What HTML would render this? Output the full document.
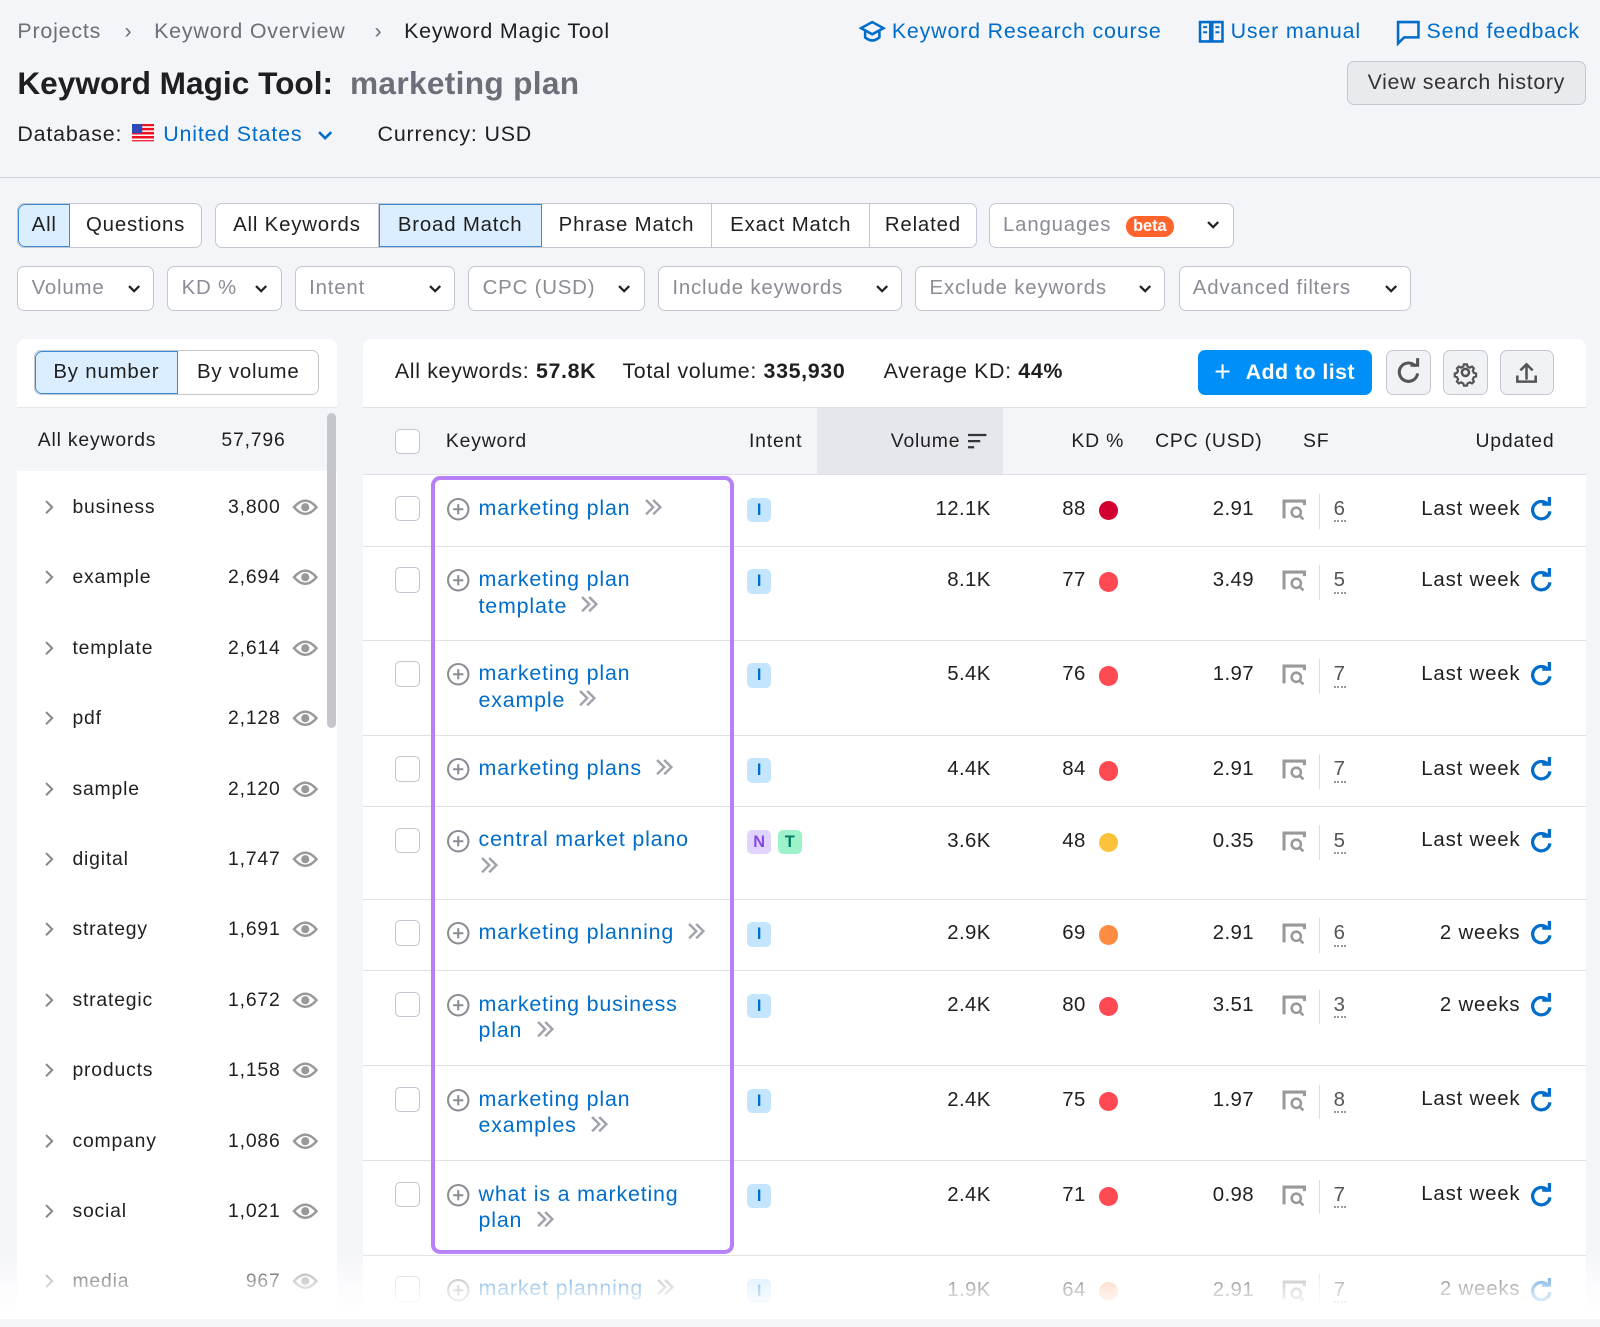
<!DOCTYPE html>
<html><head><meta charset="utf-8">
<style>
html{zoom:1.0204}
*{box-sizing:border-box;margin:0;padding:0}
body{width:1568px;height:1293px;overflow:hidden;background:#f4f5f9;font-family:"Liberation Sans",sans-serif;color:#1f1f1f;position:relative;letter-spacing:0.05em}
.a{position:absolute;white-space:nowrap}
.blue{color:#006dca}
.gray{color:#6c6e79}
.btn{position:absolute;background:#fff;border:1px solid #c4c7cf;border-radius:7px;height:44px;font-size:20px;display:flex;align-items:center}
.seg{display:flex;align-items:center;justify-content:center;height:100%;border-right:1px solid #c4c7cf}
.seg:last-child{border-right:none}
.sel{background:#dbeeff;outline:1px solid #3a8ad6;outline-offset:-1px;border-right:none}
.dd{color:#8a8c96;padding:0 13px;justify-content:space-between}
.chev{width:12px;height:8px;margin-left:12px}
.panel{position:absolute;background:#fff}
.row{position:absolute;left:356px;width:1198px;border-top:1px solid #e0e1e6}
.cb{position:absolute;left:31px;top:20px;width:25px;height:25px;border:1px solid #c4c7cf;border-radius:5px;background:#fff}
.kw{position:absolute;left:113px;top:19px;font-size:21px;color:#006dca;line-height:26px;white-space:nowrap}
.plus{position:absolute;left:81px;top:21px;width:24px;height:24px}
.badge{display:inline-block;width:24px;height:24px;border-radius:5px;text-align:center;font-size:16px;font-weight:bold;line-height:24px;margin-right:6px;letter-spacing:0}
.bI{background:#c4e5fe;color:#006dca}
.num{position:absolute;top:22px;font-size:20px;text-align:right;letter-spacing:0.02em}
.dot{position:absolute;top:25px;left:721px;width:19px;height:19px;border-radius:50%}
.sf{position:absolute;left:900px;top:23px;width:24px;height:21px}
.sfn{position:absolute;left:951px;top:22px;font-size:20px;color:#555;border-bottom:2px dotted #999;line-height:22px}
.sep{position:absolute;left:937px;top:18px;width:1px;height:34px;background:#ddd}
.upd{position:absolute;right:32px;top:21px;font-size:20px;display:flex;align-items:center}
.lft{position:absolute;left:17px;width:313px;height:69px;font-size:19px}
.rr{display:inline-block;vertical-align:-1px;margin-left:12px}
</style></head><body>

<div class="a gray" style="left:17px;top:19px;font-size:21px">Projects</div>
<div class="a gray" style="left:122px;top:19px;font-size:21px">›</div>
<div class="a gray" style="left:151px;top:19px;font-size:21px">Keyword Overview</div>
<div class="a gray" style="left:367px;top:19px;font-size:21px">›</div>
<div class="a" style="left:396px;top:19px;font-size:21px">Keyword Magic Tool</div>

<svg class="a" style="left:842px;top:19px" width="26" height="26" viewBox="0 0 26 26"><path d="M13 3 L24 9 L13 15 L2 9Z M6 12 V18 Q13 24 20 18 V12" fill="none" stroke="#006dca" stroke-width="2.5"/></svg>
<div class="a blue" style="left:874px;top:19px;font-size:21px">Keyword Research course</div>
<svg class="a" style="left:1174px;top:19px" width="26" height="26" viewBox="0 0 26 26"><path d="M2 3H12V22H2Z M14 3H24V22H14Z" fill="none" stroke="#006dca" stroke-width="2.5"/><path d="M5 8h4M5 13h4M17 8h4M17 13h4" stroke="#006dca" stroke-width="2"/></svg>
<div class="a blue" style="left:1206px;top:19px;font-size:21px">User manual</div>
<svg class="a" style="left:1367px;top:19px" width="26" height="26" viewBox="0 0 26 26"><path d="M3 3H23V18H9L3 24Z" fill="none" stroke="#006dca" stroke-width="2.5"/></svg>
<div class="a blue" style="left:1398px;top:19px;font-size:21px">Send feedback</div>

<div class="a" style="left:17px;top:64px;font-size:31px;font-weight:bold;letter-spacing:0">Keyword Magic Tool:</div>
<div class="a" style="left:343px;top:64px;font-size:31px;font-weight:bold;color:#6c6e79;letter-spacing:0.01em">marketing plan</div>
<div class="a" style="left:1320px;top:60px;width:234px;height:43px;background:#e9eaee;border:1px solid #c4c7cf;border-radius:7px;font-size:21px;color:#333;text-align:center;line-height:41px;letter-spacing:0.03em">View search history</div>

<div class="a" style="left:17px;top:120px;font-size:21px">Database:</div>
<svg class="a" style="left:129px;top:122px" width="22" height="17" viewBox="0 0 22 17"><rect width="22" height="17" fill="#e12"/><path d="M0 3h22M0 7h22M0 11h22M0 15h22" stroke="#fff" stroke-width="1.5"/><rect width="10" height="9" fill="#3048b8"/></svg>
<div class="a blue" style="left:160px;top:120px;font-size:21px">United States</div>
<svg class="a" style="left:311px;top:126px" width="16" height="12" viewBox="0 0 16 12"><path d="M2 3l6 6 6-6" fill="none" stroke="#006dca" stroke-width="2.5"/></svg>
<div class="a" style="left:370px;top:120px;font-size:21px">Currency: USD</div>

<div class="a" style="left:0;top:173px;width:1568px;height:1px;background:#d3d5db"></div>

<div class="btn" style="left:17px;top:199px;width:181px"><div class="seg sel" style="width:51px;border-radius:7px 0 0 7px">All</div><div class="seg" style="width:129px">Questions</div></div>
<div class="btn" style="left:211px;top:199px;width:746px"><div class="seg" style="width:159px">All Keywords</div><div class="seg sel" style="width:160px">Broad Match</div><div class="seg" style="width:167px">Phrase Match</div><div class="seg" style="width:155px">Exact Match</div><div class="seg" style="width:103px">Related</div></div>
<div class="btn dd" style="left:969px;top:199px;width:240px"><span>Languages <span style="display:inline-block;background:#ff642d;color:#fff;border-radius:10px;font-size:16px;padding:1px 7px;margin-left:8px;font-weight:bold;letter-spacing:0">beta</span></span><svg class="chev" viewBox="0 0 12 8"><path d="M1 1l5 5 5-5" fill="none" stroke="#222" stroke-width="2.2"/></svg></div>

<div class="btn dd" style="left:17px;top:261px;width:134px">Volume<svg class="chev" viewBox="0 0 12 8"><path d="M1 1l5 5 5-5" fill="none" stroke="#222" stroke-width="2.2"/></svg></div>
<div class="btn dd" style="left:164px;top:261px;width:112px">KD %<svg class="chev" viewBox="0 0 12 8"><path d="M1 1l5 5 5-5" fill="none" stroke="#222" stroke-width="2.2"/></svg></div>
<div class="btn dd" style="left:289px;top:261px;width:157px">Intent<svg class="chev" viewBox="0 0 12 8"><path d="M1 1l5 5 5-5" fill="none" stroke="#222" stroke-width="2.2"/></svg></div>
<div class="btn dd" style="left:459px;top:261px;width:173px">CPC (USD)<svg class="chev" viewBox="0 0 12 8"><path d="M1 1l5 5 5-5" fill="none" stroke="#222" stroke-width="2.2"/></svg></div>
<div class="btn dd" style="left:645px;top:261px;width:239px">Include keywords<svg class="chev" viewBox="0 0 12 8"><path d="M1 1l5 5 5-5" fill="none" stroke="#222" stroke-width="2.2"/></svg></div>
<div class="btn dd" style="left:897px;top:261px;width:245px">Exclude keywords<svg class="chev" viewBox="0 0 12 8"><path d="M1 1l5 5 5-5" fill="none" stroke="#222" stroke-width="2.2"/></svg></div>
<div class="btn dd" style="left:1155px;top:261px;width:228px">Advanced filters<svg class="chev" viewBox="0 0 12 8"><path d="M1 1l5 5 5-5" fill="none" stroke="#222" stroke-width="2.2"/></svg></div>

<div class="panel" style="left:17px;top:332px;width:313px;height:961px;border-radius:8px 8px 0 0"></div>
<div class="btn" style="left:33px;top:343px;width:280px;height:44px"><div class="seg sel" style="width:141px;border-radius:7px 0 0 7px">By number</div><div class="seg" style="width:138px">By volume</div></div>
<div class="a" style="left:17px;top:399px;width:313px;height:63px;background:#f4f5f9;border-top:1px solid #e6e7eb"></div>
<div class="a" style="left:37px;top:420px;font-size:19px">All keywords</div>
<div class="a" style="left:217px;top:420px;font-size:19px">57,796</div>
<div class="a" style="left:320px;top:405px;width:9px;height:308px;border-radius:5px;background:#c4c6cc"></div>

<div id="left"></div>

<div class="panel" style="left:356px;top:332px;width:1198px;height:961px;border-radius:8px 8px 0 0"></div>
<div class="a" style="left:387px;top:352px;font-size:21px;letter-spacing:0.03em">All keywords: <b>57.8K</b></div>
<div class="a" style="left:610px;top:352px;font-size:21px;letter-spacing:0.03em">Total volume: <b>335,930</b></div>
<div class="a" style="left:866px;top:352px;font-size:21px;letter-spacing:0.03em">Average KD: <b>44%</b></div>
<div class="a" style="left:1174px;top:343px;width:171px;height:44px;background:#008ff8;border-radius:7px;color:#fff;font-size:21px;font-weight:bold;line-height:44px;padding-left:16px;letter-spacing:0.02em"><span style="font-size:28px;font-weight:normal;vertical-align:-2px;margin-right:14px">+</span>Add to list</div>
<div class="a" style="left:1358px;top:343px;width:44px;height:44px;background:#f1f2f5;border:1px solid #c4c7cf;border-radius:7px"><svg width="42" height="42" viewBox="0 0 42 42"><path d="M28 15 A9 9 0 1 0 30 22" fill="none" stroke="#555" stroke-width="3"/><path d="M23 14h7V7" fill="none" stroke="#555" stroke-width="3"/></svg></div>
<div class="a" style="left:1414px;top:343px;width:44px;height:44px;background:#f1f2f5;border:1px solid #c4c7cf;border-radius:7px"><svg width="42" height="42" viewBox="0 0 42 42"><circle cx="21" cy="21" r="3.5" fill="none" stroke="#555" stroke-width="2.5"/><path d="M19 10h4l1 3 3 1.5 3-1.5 2.5 2.5-1.5 3 1.5 3 3 1v4l-3 1-1.5 3 1.5 3-2.5 2.5-3-1.5-3 1.5-1 3h-4l-1-3-3-1.5-3 1.5-2.5-2.5 1.5-3-1.5-3-3-1v-4l3-1 1.5-3-1.5-3 2.5-2.5 3 1.5 3-1.5z" transform="translate(21 21) scale(0.72) translate(-21 -21)" fill="none" stroke="#555" stroke-width="3"/></svg></div>
<div class="a" style="left:1470px;top:343px;width:53px;height:44px;background:#f1f2f5;border:1px solid #c4c7cf;border-radius:7px"><svg width="51" height="42" viewBox="0 0 51 42"><path d="M25 28V13M19 19l6-6 6 6M16 24v6h18v-6" fill="none" stroke="#555" stroke-width="2.5"/></svg></div>

<div class="a" style="left:356px;top:399px;width:1198px;height:66px;background:#f4f5f9;border-top:1px solid #e0e1e6"></div>
<div class="a" style="left:801px;top:400px;width:182px;height:65px;background:#e6e7ec"></div>
<div class="a" style="left:387px;top:420px;width:25px;height:25px;border:1px solid #c4c7cf;border-radius:5px;background:#fff"></div>
<div class="a" style="left:437px;top:421px;font-size:19px">Keyword</div>
<div class="a" style="left:734px;top:421px;font-size:19px">Intent</div>
<div class="a" style="left:873px;top:421px;font-size:19px">Volume</div>
<svg class="a" style="left:948px;top:424px" width="20" height="16" viewBox="0 0 20 16"><path d="M1 2h18M1 8h12M1 14h6" stroke="#333" stroke-width="2.2"/></svg>
<div class="a" style="left:1050px;top:421px;font-size:19px">KD %</div>
<div class="a" style="left:1132px;top:421px;font-size:19px">CPC (USD)</div>
<div class="a" style="left:1277px;top:421px;font-size:19px">SF</div>
<div class="a" style="left:1446px;top:421px;font-size:19px">Updated</div>

<div id="rows"></div>

<div class="a" style="left:422px;top:466px;width:297px;height:763px;border:4px solid #b77ff8;border-radius:9px"></div>

<div class="a" style="left:0;top:1225px;width:1568px;height:68px;background:linear-gradient(rgba(255,255,255,0),rgba(255,255,255,0.7) 55%,#fff 90%)"></div>

<script>
var L=[["business","3,800"],["example","2,694"],["template","2,614"],["pdf","2,128"],["sample","2,120"],["digital","1,747"],["strategy","1,691"],["strategic","1,672"],["products","1,158"],["company","1,086"],["social","1,021"],["media","967"]];
var h="";L.forEach(function(x,i){var y=462+i*69;
h+='<div class="lft" style="top:'+y+'px"><svg class="a" style="left:26px;top:27px" width="10" height="16" viewBox="0 0 10 16"><path d="M2 2l6 6-6 6" fill="none" stroke="#888" stroke-width="2"/></svg><div class="a" style="left:54px;top:24px">'+x[0]+'</div><div class="a" style="right:55px;top:24px">'+x[1]+'</div><svg class="a" style="left:269px;top:24px" width="26" height="22" viewBox="0 0 26 22"><path d="M2 11Q13 -2 24 11Q13 24 2 11Z" fill="none" stroke="#999" stroke-width="2.4"/><circle cx="13" cy="11" r="4" fill="#999"/></svg></div>';});
document.getElementById("left").outerHTML=h;
var RR='<svg class="rr" width="20" height="18" viewBox="0 0 20 18"><path d="M3 2l7 7-7 7M10 2l7 7-7 7" fill="none" stroke="#a0a2ab" stroke-width="2.4"/></svg>';
var R=[[465,70,"marketing plan","I","12.1K",88,"#d1002f","2.91",6,"Last week"],
[535,92,"marketing plan<br>template","I","8.1K",77,"#ff4953","3.49",5,"Last week"],
[627,93,"marketing plan<br>example","I","5.4K",76,"#ff4953","1.97",7,"Last week"],
[720,70,"marketing plans","I","4.4K",84,"#ff4953","2.91",7,"Last week"],
[790,91,"central market plano<br>","NT","3.6K",48,"#fdc23c","0.35",5,"Last week"],
[881,70,"marketing planning","I","2.9K",69,"#ff8c43","2.91",6,"2 weeks"],
[951,93,"marketing business<br>plan","I","2.4K",80,"#ff4953","3.51",3,"2 weeks"],
[1044,93,"marketing plan<br>examples","I","2.4K",75,"#ff4953","1.97",8,"Last week"],
[1137,93,"what is a marketing<br>plan","I","2.4K",71,"#ff4953","0.98",7,"Last week"],
[1230,70,"market planning","I","1.9K",64,"#ffb38a","2.91",7,"2 weeks"]];
var s="";R.forEach(function(r){
var ib=r[3]=="NT"?'<span class="badge" style="background:#e0d3fc;color:#8649e1">N</span><span class="badge" style="background:#9ef2c9;color:#007c65">T</span>':'<span class="badge bI">I</span>';
var kwh=r[2].slice(-4)=="<br>"?r[2]+'<span style="margin-left:-12px">'+RR+'</span>':r[2]+RR;
s+='<div class="row" style="top:'+r[0]+'px;height:'+r[1]+'px"><div class="cb"></div><svg class="plus" viewBox="0 0 24 24"><circle cx="12" cy="12" r="10" fill="none" stroke="#8a8c96" stroke-width="2"/><path d="M12 7v10M7 12h10" stroke="#8a8c96" stroke-width="2"/></svg><div class="kw">'+kwh+'</div><div class="a" style="left:376px;top:22px">'+ib+'</div><div class="num" style="right:583px">'+r[4]+'</div><div class="num" style="right:490px">'+r[5]+'</div><div class="dot" style="background:'+r[6]+'"></div><div class="num" style="right:325px">'+r[7]+'</div><svg class="sf" viewBox="0 0 24 21"><path d="M2 19V2h20v4" fill="none" stroke="#999" stroke-width="3"/><circle cx="14" cy="13" r="4.5" fill="none" stroke="#999" stroke-width="2.5"/><path d="M17 16l4 4" stroke="#999" stroke-width="2.5"/></svg><div class="sep"></div><div class="sfn">'+r[8]+'</div><div class="upd">'+r[9]+'<svg style="margin-left:8px" width="24" height="24" viewBox="0 0 24 24"><path d="M19 8A8.5 8.5 0 1 0 20.5 14" fill="none" stroke="#006dca" stroke-width="3.2"/><path d="M13 7h7V0" fill="none" stroke="#006dca" stroke-width="3.2"/></svg></div></div>';});
document.getElementById("rows").outerHTML=s;
</script>
</body></html>
